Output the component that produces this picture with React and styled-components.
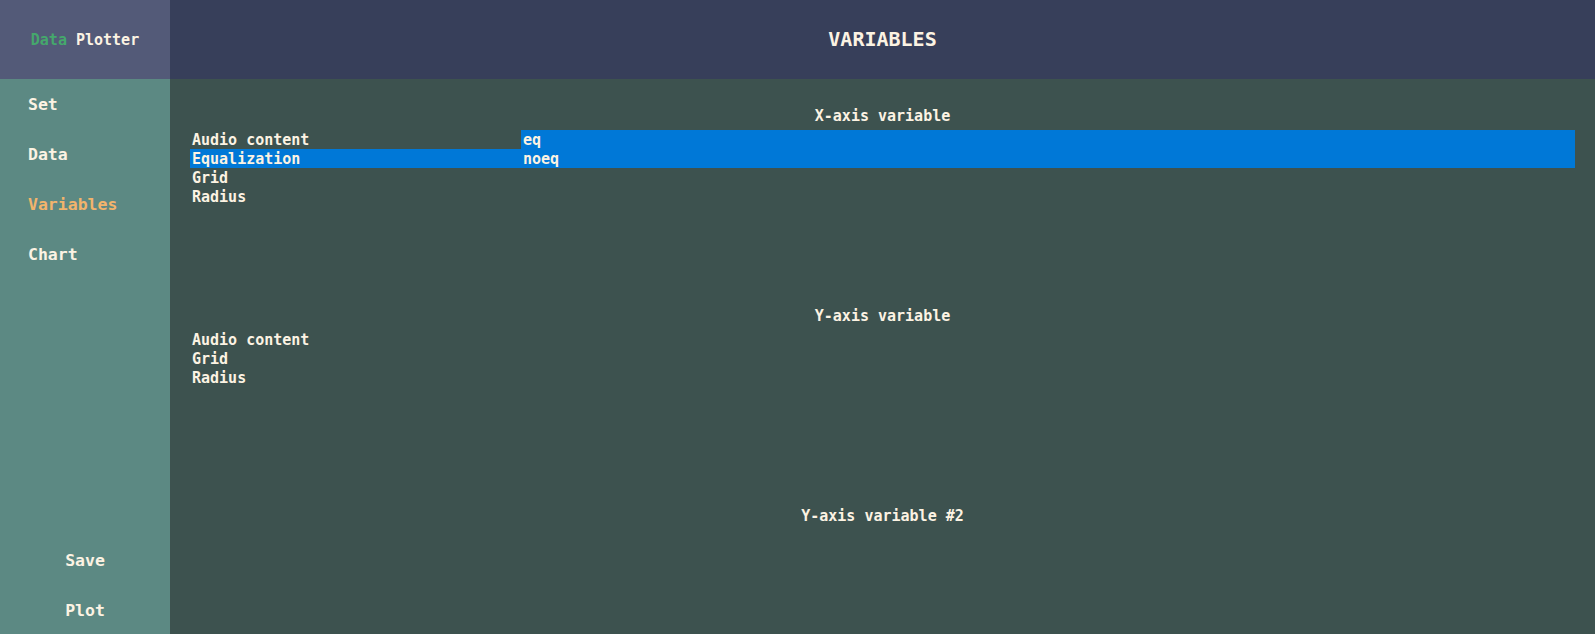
import React, { useState } from "react"
import styled, { createGlobalStyle } from "styled-components"

const GlobalStyle = createGlobalStyle`
	html, body {
		margin: 0;
		padding: 0;
		height: 100%;
		overflow: hidden;
	}
	body {
		font-family: "DejaVu Sans Mono", "Liberation Mono", monospace;
		font-weight: bold;
		color: #fcf3e3;
		background: #3d524f;
	}
`

const Layout = styled.div`
	display: grid;
	grid-template-columns: 170px 1fr;
	grid-template-rows: 79px 1fr;
	width: 100vw;
	height: 100vh;
`

const Logo = styled.div`
	display: flex;
	align-items: center;
	justify-content: center;
	background: #535a78;
	font-size: 15px;

	span {
		color: #45a86c;
	}
`

const Header = styled.header`
	display: flex;
	align-items: center;
	justify-content: center;
	padding-bottom: 1px;
	background: #373f5a;
	font-size: 20px;
`

const Sidebar = styled.nav`
	display: flex;
	flex-direction: column;
	justify-content: space-between;
	background: #5c8983;
`

const NavGroup = styled.div`
	display: flex;
	flex-direction: column;
`

const NavItem = styled.div`
	height: 50px;
	box-sizing: border-box;
	display: flex;
	align-items: center;
	justify-content: ${props => (props.centered ? "center" : "flex-start")};
	padding-left: ${props => (props.centered ? "0" : "28px")};
	padding-top: ${props => (props.centered ? "3px" : "0")};
	font-size: 16.5px;
	color: ${props => (props.active ? "#f2b46c" : "#fcf3e3")};
	cursor: pointer;
`

const Main = styled.main`
	display: flex;
	flex-direction: column;
	padding: 0 20px;
	overflow: hidden;
`

const Section = styled.section`
	height: 200px;
	flex-shrink: 0;
	padding-top: 28px;
	box-sizing: border-box;
`

const SectionTitle = styled.div`
	text-align: center;
	font-size: 15px;
	line-height: 19px;
	margin-bottom: 4px;
`

const Picker = styled.div`
	display: grid;
	grid-template-columns: 331px 1fr;
	align-items: start;
`

const List = styled.ul`
	list-style: none;
	margin: 0;
	padding: 0;
	font-size: 15px;
	line-height: 17px;
`

const Row = styled.li`
	padding: 2px 0 0 2px;
	background: ${props => (props.selected ? "#0078d7" : "transparent")};
	cursor: pointer;
`

const Values = styled(List)`
	background: #0078d7;
`

const sections = [
	{
		title: "X-axis variable",
		items: ["Audio content", "Equalization", "Grid", "Radius"],
		selected: "Equalization",
		values: ["eq", "noeq"]
	},
	{
		title: "Y-axis variable",
		items: ["Audio content", "Grid", "Radius"]
	},
	{
		title: "Y-axis variable #2",
		items: []
	}
]

export default function App() {
	const [active] = useState("Variables")
	return (
		<>
			<GlobalStyle />
			<Layout>
				<Logo>
					<span>Data</span>&nbsp;Plotter
				</Logo>
				<Header>VARIABLES</Header>
				<Sidebar>
					<NavGroup>
						{["Set", "Data", "Variables", "Chart"].map(name => (
							<NavItem key={name} active={name === active}>
								{name}
							</NavItem>
						))}
					</NavGroup>
					<NavGroup>
						<NavItem centered>Save</NavItem>
						<NavItem centered>Plot</NavItem>
					</NavGroup>
				</Sidebar>
				<Main>
					{sections.map(section => (
						<Section key={section.title}>
							<SectionTitle>{section.title}</SectionTitle>
							<Picker>
								<List>
									{section.items.map(item => (
										<Row key={item} selected={item === section.selected}>
											{item}
										</Row>
									))}
								</List>
								{section.values && (
									<Values>
										{section.values.map(v => (
											<Row key={v}>{v}</Row>
										))}
									</Values>
								)}
							</Picker>
						</Section>
					))}
				</Main>
			</Layout>
		</>
	)
}
